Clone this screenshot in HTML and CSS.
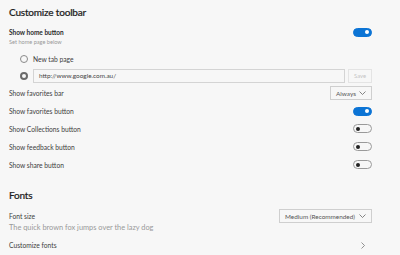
FILE: index.html
```html
<!DOCTYPE html>
<html lang="en">
<head>
    <meta charset="UTF-8">
    <title>Customize toolbar</title>
    <link rel="stylesheet" href="styles.css">
</head>
<body>

    <div class="page">
        <h2 class="title">Customize toolbar</h2>

        <div class="row home">
            <span class="label strong">Show home button</span>
            <span class="toggle on"></span>
        </div>
        <div class="hint">Set home page below</div>

        <div class="radios">
            <div class="radio-row">
                <span class="radio"></span>
                <span class="label">New tab page</span>
            </div>
            <div class="radio-row">
                <span class="radio checked"></span>
                <div class="url">http://www.google.com.au/</div>
                <span class="save">Save</span>
            </div>
        </div>

        <div class="row">
            <span class="label">Show favorites bar</span>
            <span class="select small">Always
                <svg width="7" height="4" viewBox="0 0 7 4"><path d="M0.5 0.5 L3.5 3.5 L6.5 0.5" fill="none" stroke="#666" stroke-width="0.8"/></svg>
            </span>
        </div>
        <div class="row">
            <span class="label">Show favorites button</span>
            <span class="toggle on"></span>
        </div>
        <div class="row">
            <span class="label">Show Collections button</span>
            <span class="toggle"></span>
        </div>
        <div class="row">
            <span class="label">Show feedback button</span>
            <span class="toggle"></span>
        </div>
        <div class="row">
            <span class="label">Show share button</span>
            <span class="toggle"></span>
        </div>

        <h2 class="title fonts">Fonts</h2>

        <div class="row size">
            <span class="label">Font size</span>
            <span class="select wide">Medium (Recommended)
                <svg width="7" height="4" viewBox="0 0 7 4"><path d="M0.5 0.5 L3.5 3.5 L6.5 0.5" fill="none" stroke="#666" stroke-width="0.8"/></svg>
            </span>
        </div>
        <div class="sample">The quick brown fox jumps over the lazy dog</div>

        <div class="row custom">
            <span class="label">Customize fonts</span>
            <svg class="chev" width="4" height="7" viewBox="0 0 4 7"><path d="M0.5 0.5 L3.5 3.5 L0.5 6.5" fill="none" stroke="#777" stroke-width="0.8"/></svg>
        </div>
    </div>

</body>
</html>
```

FILE: styles.css
```css
html, body {
    margin: 0;
    background-color: #f7f7f7;
}
body {
    font-family: Lato, "Noto Sans", sans-serif;
    color: #333;
}
.page {
    width: 363px;
    padding: 3px 0 0 9px;
}
.title {
    margin: 0;
    font-size: 10px;
    font-weight: 500;
    letter-spacing: -0.2px;
    line-height: 18px;
    color: #1f1f1f;
    -webkit-text-stroke: 0.2px #1f1f1f;
}
.row {
    display: flex;
    align-items: center;
    justify-content: space-between;
    height: 17.8px;
}
.label {
    font-size: 6.7px;
    color: #404040;
    white-space: nowrap;
}
.strong {
    font-weight: 700;
    font-size: 6.5px;
    color: #2b2b2b;
}
.home {
    margin-top: 5px;
    height: 12px;
}
.hint {
    font-size: 5.6px;
    line-height: 8px;
    color: #999;
}
.radios {
    margin-top: 4.5px;
    padding-left: 11px;
}
.radio-row {
    display: flex;
    align-items: center;
    height: 17px;
}
.radio {
    width: 6px;
    height: 6px;
    border: 1px solid #8a8a8a;
    border-radius: 50%;
    margin-right: 5px;
    flex-shrink: 0;
}
.radio.checked {
    width: 4px;
    height: 4px;
    border: 2px solid #6a6a6a;
}
.url {
    flex: 1;
    height: 12px;
    border: 1px solid #d4d4d4;
    font-size: 6.4px;
    line-height: 12px;
    padding-left: 5px;
    color: #444;
}
.save {
    width: 22px;
    height: 12px;
    margin-left: 3px;
    border: 1px solid #e4e4e4;
    font-size: 5.8px;
    line-height: 12px;
    text-align: center;
    color: #c4c4c4;
}
.toggle {
    position: relative;
    width: 17px;
    height: 7px;
    border: 1px solid #9a9a9a;
    border-radius: 5px;
}
.toggle::after {
    content: "";
    position: absolute;
    left: 2px;
    top: 1.5px;
    width: 4px;
    height: 4px;
    border-radius: 50%;
    background-color: #222;
}
.toggle.on {
    background-color: #0c74d5;
    border-color: #0c74d5;
}
.toggle.on::after {
    left: auto;
    right: 2px;
    background-color: #fff;
}
.select {
    display: flex;
    align-items: center;
    justify-content: space-between;
    height: 12px;
    border: 1px solid #cfcfcf;
    padding: 0 5px;
    font-size: 6.4px;
    color: #555;
    white-space: nowrap;
}
.select.small {
    width: 30px;
}
.select.wide {
    width: 81px;
}
.fonts {
    margin-top: 13px;
}
.size {
    margin-top: 6px;
    height: 12px;
}
.sample {
    font-size: 7.4px;
    line-height: 12px;
    color: #999;
    white-space: nowrap;
}
.custom {
    margin-top: 2px;
}
.chev {
    margin-right: 7px;
}
```
